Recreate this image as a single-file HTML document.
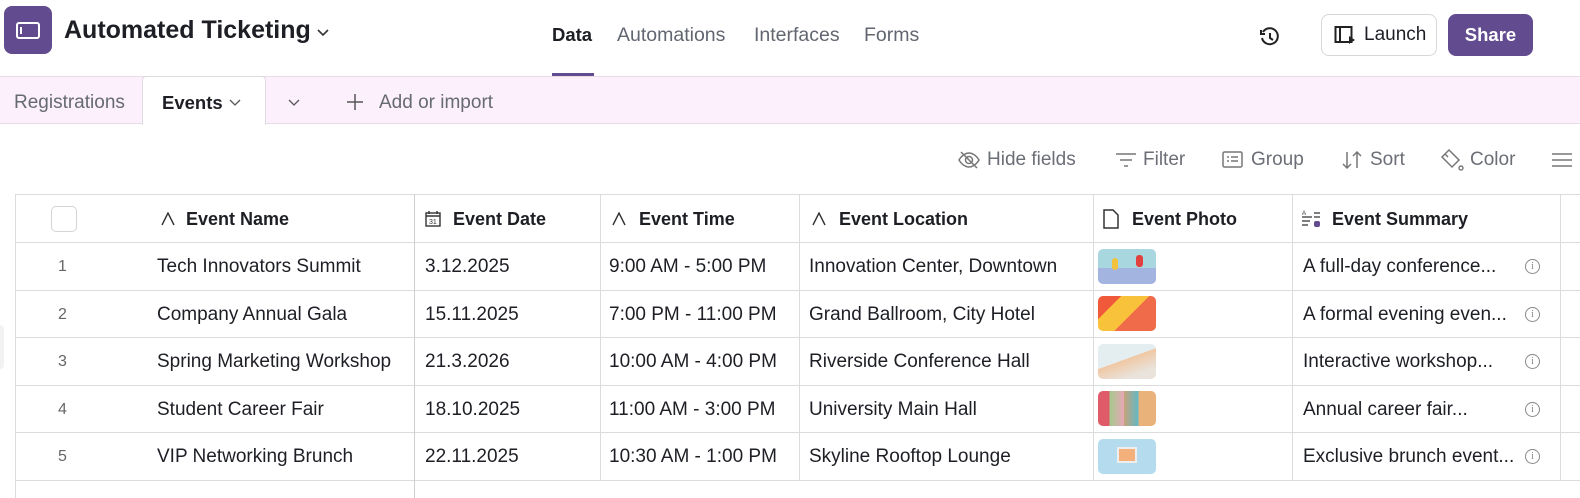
<!DOCTYPE html>
<html><head><style>
*{box-sizing:border-box;margin:0;padding:0}
body{width:1580px;height:498px;overflow:hidden;background:#fff;font-family:"Liberation Sans",sans-serif;color:#1d1f25;position:relative}
.a{position:absolute;white-space:nowrap}
.hl{position:absolute;height:1px;background:#dcdcdf}
.vl{position:absolute;width:1px;background:#dcdcdf}
.hd{font-weight:bold;font-size:18px;top:209px}
.c{font-size:19px}
.n{font-size:16px;color:#666}
.tb{font-size:19px;color:#6b6e76;top:149px}
.img{position:absolute;left:1098px;width:58px;height:35px;border-radius:5px;overflow:hidden}
.inf{position:absolute;left:1525px;width:15px;height:15px;border:1.2px solid #888;border-radius:50%;font-size:10px;color:#888;text-align:center;line-height:13px;font-family:"Liberation Serif",serif}
</style></head><body>
<div class="a" style="left:4px;top:6px;width:48px;height:48px;border-radius:8px;background:#634b8f"></div>
<div class="a" style="left:16px;top:22px;width:24px;height:17px;border:2px solid #fff;border-radius:3px"></div>
<div class="a" style="left:20px;top:27px;width:2px;height:7px;background:#fff"></div>
<div class="a" style="left:64px;top:16px;font-size:25px;font-weight:bold">Automated Ticketing</div>
<svg class="a" style="left:316px;top:28px" width="14" height="9"><path d="M2 2l5 5 5-5" fill="none" stroke="#333" stroke-width="1.6"/></svg>
<div class="a" style="left:552px;top:24px;font-size:18.5px;font-weight:bold;color:#1d1f25">Data</div>
<div class="a" style="left:617px;top:24px;font-size:19.5px;color:#616670">Automations</div>
<div class="a" style="left:754px;top:24px;font-size:19.5px;color:#616670">Interfaces</div>
<div class="a" style="left:864px;top:24px;font-size:19.5px;color:#616670">Forms</div>
<div class="a" style="left:552px;top:73px;width:42px;height:3px;background:#634b8f"></div>
<svg class="a" style="left:1259px;top:26px" width="22" height="22" viewBox="0 0 22 22"><path d="M4 6a8 8 0 1 1-1 6" fill="none" stroke="#222" stroke-width="2"/><path d="M2 4v4h4" fill="none" stroke="#222" stroke-width="2"/><path d="M11 7v5l3 2" fill="none" stroke="#222" stroke-width="2"/></svg>
<div class="a" style="left:1321px;top:14px;width:116px;height:42px;border:1px solid #d7d7da;border-radius:8px"></div>
<svg class="a" style="left:1334px;top:25px" width="22" height="20"><rect x="1.5" y="2" width="16" height="15" fill="none" stroke="#222" stroke-width="2"/><path d="M6 2v15" stroke="#222" stroke-width="2"/><path d="M15 11l6 4-6 4z" fill="#222"/></svg>
<div class="a" style="left:1364px;top:24px;font-size:19px">Launch</div>
<div class="a" style="left:1448px;top:14px;width:85px;height:42px;border-radius:8px;background:#634b8f;color:#fff;font-weight:bold;font-size:18.5px;text-align:center;line-height:42px">Share</div>
<div class="a" style="left:0;top:76px;width:1580px;height:48px;background:#fcf0fc;border-top:1px solid #e6dbe6;border-bottom:1px solid #e6dbe6"></div>
<div class="a" style="left:14px;top:92px;font-size:19px;color:#666a72">Registrations</div>
<div class="a" style="left:142px;top:76px;width:124px;height:49px;background:#fff;border:1px solid #e0dbe0;border-bottom:none;border-radius:4px 4px 0 0"></div>
<div class="a" style="left:162px;top:92px;font-size:18.5px;font-weight:bold">Events</div>
<svg class="a" style="left:228px;top:98px" width="14" height="9"><path d="M2 2l5 5 5-5" fill="none" stroke="#555" stroke-width="1.3"/></svg>
<svg class="a" style="left:287px;top:98px" width="14" height="9"><path d="M2 2l5 5 5-5" fill="none" stroke="#555" stroke-width="1.3"/></svg>
<svg class="a" style="left:346px;top:93px" width="18" height="18"><path d="M9 1v16M1 9h16" stroke="#555" stroke-width="1.5"/></svg>
<div class="a" style="left:379px;top:92px;font-size:19px;color:#666a72">Add or import</div>
<svg class="a" style="left:957px;top:150px" width="24" height="20" viewBox="0 0 24 20"><path d="M2 10c3-5 7-7 10-7s7 2 10 7c-3 5-7 7-10 7s-7-2-10-7z" fill="none" stroke="#777" stroke-width="1.5"/><circle cx="12" cy="10" r="3.5" fill="none" stroke="#777" stroke-width="1.5"/><path d="M4 2l16 16" stroke="#777" stroke-width="1.5"/></svg>
<div class="a tb" style="left:987px">Hide fields</div>
<svg class="a" style="left:1115px;top:152px" width="22" height="16"><path d="M1 2h20M5 8h12M9 14h4" stroke="#777" stroke-width="1.6"/></svg>
<div class="a tb" style="left:1143px">Filter</div>
<svg class="a" style="left:1222px;top:150px" width="22" height="20"><rect x="1" y="2" width="19" height="15" rx="1.5" fill="none" stroke="#777" stroke-width="1.5"/><path d="M5 7h2M5 11h2M9 7h7M9 11h7" stroke="#777" stroke-width="1.5"/></svg>
<div class="a tb" style="left:1251px">Group</div>
<svg class="a" style="left:1341px;top:150px" width="22" height="20"><path d="M6 2v16M2 14l4 4 4-4M16 18V2M12 6l4-4 4 4" fill="none" stroke="#777" stroke-width="1.5"/></svg>
<div class="a tb" style="left:1370px">Sort</div>
<svg class="a" style="left:1440px;top:148px" width="24" height="24"><path d="M9 2l10 10-7 7-10-10 3-3z" fill="none" stroke="#777" stroke-width="1.5"/><path d="M5 6l3 3" stroke="#777" stroke-width="1.5"/><circle cx="21" cy="20" r="2" fill="none" stroke="#777" stroke-width="1.4"/></svg>
<div class="a tb" style="left:1470px">Color</div>
<svg class="a" style="left:1552px;top:152px" width="20" height="16"><path d="M0 2h20M0 8h20M0 14h20" stroke="#777" stroke-width="1.6"/></svg>
<div class="hl" style="left:15px;top:194px;width:1565px"></div>
<div class="hl" style="left:15px;top:242px;width:1565px"></div>
<div class="hl" style="left:15px;top:290px;width:1565px"></div>
<div class="hl" style="left:15px;top:337px;width:1565px"></div>
<div class="hl" style="left:15px;top:385px;width:1565px"></div>
<div class="hl" style="left:15px;top:432px;width:1565px"></div>
<div class="hl" style="left:15px;top:480px;width:1565px"></div>
<div class="vl" style="left:15px;top:194px;height:304px"></div>
<div class="vl" style="left:414px;top:194px;height:304px;background:#cfcfd3"></div>
<div class="vl" style="left:600px;top:194px;height:286px"></div>
<div class="vl" style="left:799px;top:194px;height:286px"></div>
<div class="vl" style="left:1093px;top:194px;height:286px"></div>
<div class="vl" style="left:1292px;top:194px;height:286px"></div>
<div class="vl" style="left:1560px;top:194px;height:286px"></div>
<div class="a" style="left:0;top:325px;width:4px;height:44px;background:#f2f2f3;border-radius:0 4px 4px 0"></div>
<div class="a" style="left:51px;top:206px;width:26px;height:26px;border:1px solid #d5d5d8;border-radius:5px"></div>
<svg class="a" style="left:161px;top:212px" width="14" height="14"><path d="M1 13L7 1l6 12" fill="none" stroke="#333" stroke-width="1.4"/></svg>
<div class="a hd" style="left:186px">Event Name</div>
<svg class="a" style="left:425px;top:210px" width="16" height="17"><rect x="1" y="3" width="14" height="13" fill="none" stroke="#333" stroke-width="1.4"/><path d="M1 6h14M4 1v3M12 1v3" stroke="#333" stroke-width="1.4"/><text x="4" y="14" font-size="7" font-family="Liberation Sans" fill="#333">31</text></svg>
<div class="a hd" style="left:453px">Event Date</div>
<svg class="a" style="left:612px;top:212px" width="14" height="14"><path d="M1 13L7 1l6 12" fill="none" stroke="#333" stroke-width="1.4"/></svg>
<div class="a hd" style="left:639px">Event Time</div>
<svg class="a" style="left:812px;top:212px" width="14" height="14"><path d="M1 13L7 1l6 12" fill="none" stroke="#333" stroke-width="1.4"/></svg>
<div class="a hd" style="left:839px">Event Location</div>
<svg class="a" style="left:1103px;top:209px" width="16" height="20"><path d="M1 1h9l5 5v13H1z" fill="none" stroke="#333" stroke-width="1.5"/></svg>
<div class="a hd" style="left:1132px">Event Photo</div>
<svg class="a" style="left:1302px;top:209px" width="20" height="18"><path d="M0 8h10M0 12h8M0 16h6M12 4h6M12 8h6" stroke="#333" stroke-width="1.3"/><text x="0" y="6" font-size="6" font-family="Liberation Sans" fill="#333">A</text><rect x="12" y="12" width="6" height="6" rx="2" fill="#634b8f"/></svg>
<div class="a hd" style="left:1332px">Event Summary</div>

<div class="a n" style="left:58px;top:258px">1</div><div class="a n" style="left:58px;top:306px">2</div><div class="a n" style="left:58px;top:353px">3</div><div class="a n" style="left:58px;top:401px">4</div><div class="a n" style="left:58px;top:448px">5</div>

<div class="a c" style="left:157px;top:256px">Tech Innovators Summit</div>
<div class="a c" style="left:425px;top:256px">3.12.2025</div>
<div class="a c" style="left:609px;top:256px">9:00 AM - 5:00 PM</div>
<div class="a c" style="left:809px;top:256px">Innovation Center, Downtown</div>
<div class="a c" style="left:1303px;top:256px">A full-day conference...</div>

<div class="a c" style="left:157px;top:304px">Company Annual Gala</div>
<div class="a c" style="left:425px;top:304px">15.11.2025</div>
<div class="a c" style="left:609px;top:304px">7:00 PM - 11:00 PM</div>
<div class="a c" style="left:809px;top:304px">Grand Ballroom, City Hotel</div>
<div class="a c" style="left:1303px;top:304px">A formal evening even...</div>

<div class="a c" style="left:157px;top:351px">Spring Marketing Workshop</div>
<div class="a c" style="left:425px;top:351px">21.3.2026</div>
<div class="a c" style="left:609px;top:351px">10:00 AM - 4:00 PM</div>
<div class="a c" style="left:809px;top:351px">Riverside Conference Hall</div>
<div class="a c" style="left:1303px;top:351px">Interactive workshop...</div>

<div class="a c" style="left:157px;top:399px">Student Career Fair</div>
<div class="a c" style="left:425px;top:399px">18.10.2025</div>
<div class="a c" style="left:609px;top:399px">11:00 AM - 3:00 PM</div>
<div class="a c" style="left:809px;top:399px">University Main Hall</div>
<div class="a c" style="left:1303px;top:399px">Annual career fair...</div>

<div class="a c" style="left:157px;top:446px">VIP Networking Brunch</div>
<div class="a c" style="left:425px;top:446px">22.11.2025</div>
<div class="a c" style="left:609px;top:446px">10:30 AM - 1:00 PM</div>
<div class="a c" style="left:809px;top:446px">Skyline Rooftop Lounge</div>
<div class="a c" style="left:1303px;top:446px">Exclusive brunch event...</div>

<div class="img" style="top:249px;background:linear-gradient(#a9d7e0 55%,#a3b4e0 55%)"><div class="a" style="left:14px;top:9px;width:6px;height:12px;background:#f2c23c;border-radius:3px"></div><div class="a" style="left:38px;top:6px;width:7px;height:12px;background:#e2403c;border-radius:3px"></div></div>
<div class="img" style="top:296px;background:linear-gradient(135deg,#f05a3a 25%,#f8c23a 25%,#f8c23a 55%,#ef6b4a 55%)"></div>
<div class="img" style="top:344px;background:linear-gradient(160deg,#e4eef1 45%,#f0c7a3 45%,#e9e3dc 80%)"></div>
<div class="img" style="top:391px;background:linear-gradient(90deg,#e05b6a 20%,#a5c98e 20%,#e8a7b7 45%,#c7a379 45%,#5fb9c8 70%,#e9b27a 70%)"></div>
<div class="img" style="top:439px;background:#b4dcee"><div class="a" style="left:19px;top:8px;width:20px;height:16px;background:#f3b07a;border:2px solid #eee"></div></div>

<div class="inf" style="top:259px">i</div><div class="inf" style="top:307px">i</div><div class="inf" style="top:354px">i</div><div class="inf" style="top:402px">i</div><div class="inf" style="top:449px">i</div>
</body></html>
